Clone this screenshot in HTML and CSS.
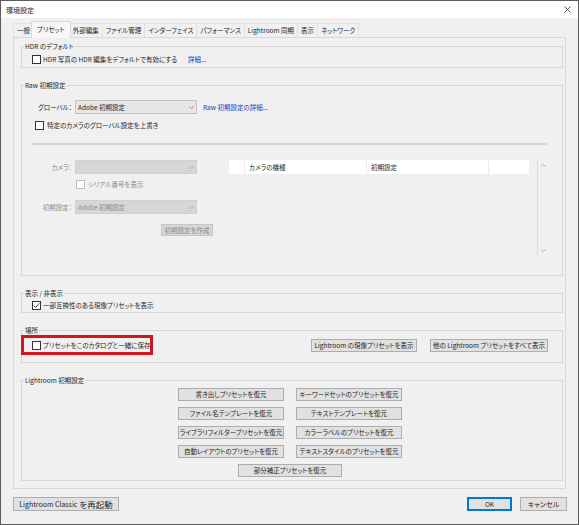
FILE: index.html
```html
<!DOCTYPE html>
<html lang="ja">
<head>
<meta charset="utf-8">
<title>環境設定</title>
<link rel="stylesheet" href="styles.css">
</head>
<body>
<div class="window">
  <div class="titlebar">
    <span class="title">環境設定</span>
    <svg class="close" width="7" height="7" viewBox="0 0 7 7"><path d="M0.5 0.5L6.5 6.5M6.5 0.5L0.5 6.5" stroke="#444" stroke-width="0.9" fill="none"/></svg>
  </div>
  <div class="client">
    <div class="tabs">
      <span class="tab">一般</span>
      <span class="tab active">プリセット</span>
      <span class="tab">外部編集</span>
      <span class="tab">ファイル管理</span>
      <span class="tab">インターフェイス</span>
      <span class="tab">パフォーマンス</span>
      <span class="tab">Lightroom 同期</span>
      <span class="tab">表示</span>
      <span class="tab">ネットワーク</span>
    </div>
    <div class="panel">
      <fieldset class="group g-hdr">
        <legend>HDR のデフォルト</legend>
        <div class="row">
          <span class="cb"></span>
          <span class="cb-text">HDR 写真の HDR 編集をデフォルトで有効にする</span>
          <a class="link hdr-link">詳細...</a>
        </div>
      </fieldset>

      <fieldset class="group g-raw">
        <legend>Raw 初期設定</legend>
        <div class="form-row">
          <span class="flabel">グローバル：</span>
          <span class="select"><span>Adobe 初期設定</span><svg class="chev" width="5" height="3" viewBox="0 0 5 3"><path d="M0.3 0.3L2.5 2.6L4.7 0.3" stroke="#7a7a7a" stroke-width="0.8" fill="none"/></svg></span>
          <a class="link raw-link">Raw 初期設定の詳細...</a>
        </div>
        <div class="row override">
          <span class="cb"></span>
          <span class="cb-text wide-gap">特定のカメラのグローバル設定を上書き</span>
        </div>
        <div class="sep"></div>
        <div class="camera-area">
          <div class="camera-form">
            <div class="form-row">
              <span class="flabel dis">カメラ：</span>
              <span class="select dis"><span></span><svg class="chev" width="5" height="3" viewBox="0 0 5 3"><path d="M0.3 0.3L2.5 2.6L4.7 0.3" stroke="#a9a9a9" stroke-width="0.8" fill="none"/></svg></span>
            </div>
            <div class="row serial">
              <span class="cb dis"></span>
              <span class="cb-text wide-gap dis">シリアル番号を表示</span>
            </div>
            <div class="form-row preset-row">
              <span class="flabel dis">初期設定：</span>
              <span class="select dis"><span>Adobe 初期設定</span><svg class="chev" width="5" height="3" viewBox="0 0 5 3"><path d="M0.3 0.3L2.5 2.6L4.7 0.3" stroke="#a9a9a9" stroke-width="0.8" fill="none"/></svg></span>
            </div>
            <button class="btn dis create">初期設定を作成</button>
          </div>
          <div class="table">
            <div class="thead">
              <span class="th c0"></span>
              <span class="th c1">カメラの機種</span>
              <span class="th c2">初期設定</span>
              <span class="th c3"></span>
            </div>
          </div>
          <div class="vscroll">
            <svg width="5" height="3" viewBox="0 0 5 3"><path d="M0.3 2.7L2.5 0.4L4.7 2.7" stroke="#a8a8a8" stroke-width="0.8" fill="none"/></svg>
            <svg width="5" height="3" viewBox="0 0 5 3"><path d="M0.3 0.3L2.5 2.6L4.7 0.3" stroke="#a8a8a8" stroke-width="0.8" fill="none"/></svg>
          </div>
        </div>
      </fieldset>

      <fieldset class="group g-show">
        <legend>表示 / 非表示</legend>
        <div class="row">
          <span class="cb checked"><svg width="7" height="7" viewBox="0 0 7 7"><path d="M0.8 3.6L2.7 5.5L6.3 1.2" stroke="#222" stroke-width="0.9" fill="none"/></svg></span>
          <span class="cb-text">一部互換性のある現像プリセットを表示</span>
        </div>
      </fieldset>

      <fieldset class="group g-loc">
        <legend>場所</legend>
        <div class="loc-row">
          <div class="highlight">
            <span class="cb"></span>
            <span class="cb-text">プリセットをこのカタログと一緒に保存</span>
          </div>
          <button class="btn show-dev">Lightroom の現像プリセットを表示</button>
          <button class="btn show-all">他の Lightroom プリセットをすべて表示</button>
        </div>
      </fieldset>

      <fieldset class="group g-lr">
        <legend>Lightroom 初期設定</legend>
        <div class="restore-grid">
          <button class="btn">書き出しプリセットを復元</button>
          <button class="btn">キーワードセットのプリセットを復元</button>
          <button class="btn">ファイル名テンプレートを復元</button>
          <button class="btn">テキストテンプレートを復元</button>
          <button class="btn">ライブラリフィルタープリセットを復元</button>
          <button class="btn">カラーラベルのプリセットを復元</button>
          <button class="btn">自動レイアウトのプリセットを復元</button>
          <button class="btn">テキストスタイルのプリセットを復元</button>
          <button class="btn span-all">部分補正プリセットを復元</button>
        </div>
      </fieldset>
    </div>

    <div class="footer">
      <button class="btn restart">Lightroom Classic <span class="big">を再起動</span></button>
      <button class="btn ok">OK</button>
      <button class="btn cancel">キャンセル</button>
    </div>
  </div>
</div>
</body>
</html>
```

FILE: styles.css
```css
* { box-sizing: border-box; }

html, body {
  margin: 0;
  padding: 0;
}

body {
  width: 579px;
  height: 525px;
  background: #f0f0f0;
  font-family: "Noto Sans CJK JP", "Noto Sans", sans-serif;
  font-size: 6.5px;
  line-height: 10px;
  color: #262626;
  font-feature-settings: "palt";
  overflow: hidden;
}

.window {
  width: 579px;
  height: 525px;
  border: 1px solid #5b5b5b;
  background: #f0f0f0;
  display: flex;
  flex-direction: column;
}

.titlebar {
  height: 17px;
  flex: none;
  background: #fff;
  display: flex;
  align-items: center;
  justify-content: space-between;
  padding: 0 7px 0 5px;
}

.title { font-size: 7px; }

.client {
  padding: 3px 12px 0 12px;
}

/* Tabs */
.tabs {
  display: flex;
  align-items: flex-end;
  height: 16px;
  position: relative;
  z-index: 1;
}

.tab {
  height: 14px;
  padding: 0 3px;
  border: 1px solid #e2e2e2;
  border-bottom: none;
  margin-right: -1px;
  line-height: 13px;
  background: #f0f0f0;
  white-space: nowrap;
}

.tab.active {
  height: 17px;
  margin: 0 -2px -1px -2px;
  padding: 0 5px;
  line-height: 15px;
  background: #f7f7f7;
  border-color: #dadada;
  position: relative;
  z-index: 2;
}

/* Panel */
.panel {
  border: 1px solid #d9d9d9;
  padding: 3px 2px 7px 7px;
  background: #f0f0f0;
}

.group {
  margin: 0 0 12px;
  padding: 0 14px 0 10px;
  border: 1px solid #d6d6d6;
  min-width: 0;
}

.group legend {
  padding: 0 1px;
  margin-left: -8px;
  line-height: 10px;
}

.g-hdr { padding-top: 3px; padding-bottom: 3px; }
.g-raw { padding-top: 10px; padding-bottom: 19px; }
.g-show { padding-top: 2px; padding-bottom: 2px; }
.g-loc { padding-top: 0; padding-bottom: 7px; }
.g-lr { padding-top: 3px; padding-bottom: 3px; margin-bottom: 0; }

.row {
  display: flex;
  align-items: center;
  height: 10px;
  white-space: nowrap;
}

.cb {
  width: 9px;
  height: 9px;
  border: 1px solid #333;
  background: #fff;
  flex: none;
  display: flex;
  align-items: center;
  justify-content: center;
}

.cb.dis { border-color: #bdbdbd; }

.cb-text { margin-left: 2px; }
.cb-text.wide-gap { margin-left: 3px; }

.dis { color: #8c8c8c; }

.link {
  color: #2340b8;
  cursor: pointer;
}

.hdr-link { margin-left: 11px; }
.raw-link { margin-left: 6px; }

.form-row {
  display: flex;
  align-items: center;
  height: 14px;
  white-space: nowrap;
}

.flabel {
  width: 40px;
  text-align: right;
  margin-right: 3px;
  flex: none;
}

.select {
  width: 122px;
  height: 14px;
  flex: none;
  background: #e6e6e6;
  border: 1px solid #c4c4c4;
  display: flex;
  align-items: center;
  justify-content: space-between;
  padding: 0 2px 0 2px;
}

.select.dis {
  background: #d6d6d6;
  border-color: #d0d0d0;
}

.override {
  margin-top: 6px;
  padding-left: 3px;
}

.sep {
  margin-top: 13px;
  height: 2px;
  background: #d4d4d4;
  width: 515px;
}

.camera-area {
  margin-top: 15px;
  display: flex;
  height: 96px;
}

.camera-form {
  width: 197px;
  flex: none;
  display: flex;
  flex-direction: column;
}

.serial {
  margin-top: 5px;
  padding-left: 44px;
}

.preset-row { margin-top: 11px; }

.btn {
  font: inherit;
  color: inherit;
  font-feature-settings: "palt";
  margin: 0;
  height: 13px;
  padding: 0;
  background: #e1e1e1;
  border: 1px solid #adadad;
  border-radius: 0;
  display: flex;
  align-items: center;
  justify-content: center;
  line-height: 11px;
  white-space: nowrap;
}

.btn.dis {
  background: #d6d6d6;
  border-color: #c6c6c6;
  color: #8c8c8c;
}

.create {
  margin-top: 10px;
  margin-left: 129px;
  width: 52px;
  height: 12px;
}

.table {
  width: 300px;
  flex: none;
}

.thead {
  display: flex;
  height: 14px;
}

.th {
  background: #fff;
  height: 14px;
  border-right: 1px solid #ececec;
  padding-left: 4px;
  line-height: 14px;
}

.c0 { width: 16px; }
.c1 { width: 122px; }
.c2 { width: 122px; }
.c3 { width: 40px; border-right: none; }

.vscroll {
  margin-left: 8px;
  width: 11px;
  border-left: 1px solid #dcdcdc;
  display: flex;
  flex-direction: column;
  align-items: center;
  justify-content: space-between;
  padding: 4px 0 4px;
}

.loc-row {
  display: flex;
  align-items: center;
  height: 20px;
}

.highlight {
  margin-left: -11px;
  width: 132px;
  height: 20px;
  border: 3px solid #d3161d;
  padding-left: 8px;
  display: flex;
  align-items: center;
  white-space: nowrap;
  flex: none;
}

.show-dev {
  margin-left: auto;
  width: 106px;
}

.show-all {
  margin-left: 13px;
  width: 118px;
}

.restore-grid {
  display: grid;
  grid-template-columns: 106px 106px;
  column-gap: 12px;
  row-gap: 6px;
  justify-content: center;
}

.restore-grid .btn { width: 106px; }

.restore-grid .span-all {
  grid-column: 1 / -1;
  justify-self: center;
  width: 104px;
}

.footer {
  display: flex;
  margin-top: 8px;
  margin-right: -1px;
}

.footer .btn { height: 14px; }

.restart {
  width: 106px;
  font-size: 7px;
}

.restart .big {
  font-size: 8.5px;
  margin-left: 2px;
}

.ok {
  margin-left: auto;
  width: 45px;
  border-color: #0078d7;
  box-shadow: inset 0 0 0 1px #0078d7;
}

.cancel {
  margin-left: 8px;
  width: 47px;
  font-size: 7px;
}
```
